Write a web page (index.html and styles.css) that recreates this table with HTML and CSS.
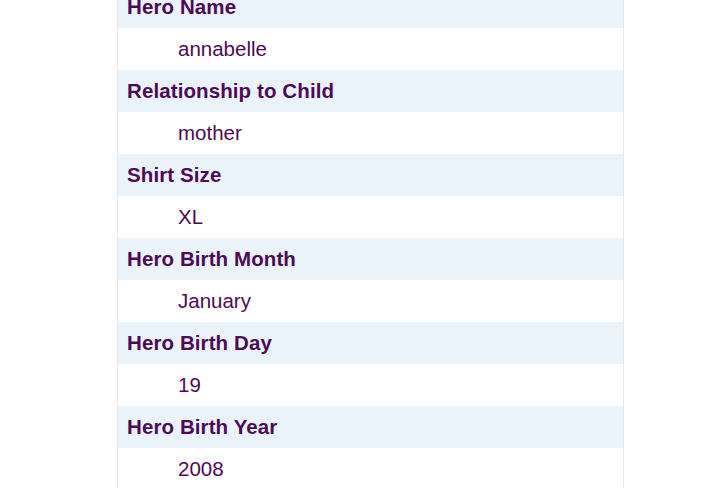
FILE: index.html
```html
<!DOCTYPE html>
<html>
<head>
<meta charset="utf-8">
<link rel="stylesheet" href="styles.css">
</head>
<body>
<div class="entry">
  <div class="label">Hero Name</div>
  <div class="value">annabelle</div>
  <div class="label">Relationship to Child</div>
  <div class="value">mother</div>
  <div class="label">Shirt Size</div>
  <div class="value">XL</div>
  <div class="label">Hero Birth Month</div>
  <div class="value">January</div>
  <div class="label">Hero Birth Day</div>
  <div class="value">19</div>
  <div class="label">Hero Birth Year</div>
  <div class="value">2008</div>
</div>
</body>
</html>
```
FILE: styles.css
```css
html, body {
  margin: 0;
  padding: 0;
  background: #ffffff;
}
body {
  font-family: "Liberation Sans", Arial, sans-serif;
  color: #4e0a55;
}
.entry {
  margin: -14px 0 0 117px;
  width: 505px;
  border-left: 1px solid #e6e6e6;
  border-right: 1px solid #e6e6e6;
  display: flex;
  flex-direction: column;
}
.label, .value {
  height: 42px;
  line-height: 42px;
  font-size: 20.5px;
  white-space: nowrap;
}
.label {
  background: #eaf2fa;
  font-weight: bold;
  padding-left: 9px;
  letter-spacing: 0.1px;
}
.value {
  background: #ffffff;
  padding-left: 60px;
}
```
